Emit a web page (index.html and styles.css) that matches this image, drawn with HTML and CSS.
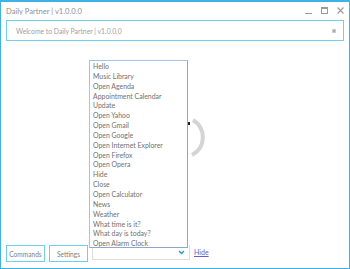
FILE: index.html
```html
<!DOCTYPE html>
<html>
<head>
<meta charset="utf-8">
<link rel="stylesheet" href="styles.css">
</head>
<body>
<div class="window">
  <div class="titlebar">
    <span class="title">Daily Partner | v1.0.0.0</span>
    <div class="controls">
      <span class="ctl min"></span>
      <span class="ctl max"></span>
      <span class="ctl close">
        <svg width="7" height="7" viewBox="0 0 7 7"><path d="M0.5 0.5L6.5 6.5M6.5 0.5L0.5 6.5" stroke="#999" stroke-width="1.1"/></svg>
      </span>
    </div>
  </div>
  <div class="welcome">
    <span class="welcome-text">Welcome to Daily Partner | v1.0.0.0</span>
    <span class="welcome-icon"></span>
  </div>
  <div class="content">
    <svg class="spinner" width="16" height="40" viewBox="0 0 16 40"><path d="M3 2 A20 20 0 0 1 2 37" fill="none" stroke="#d4d4d4" stroke-width="4"/></svg>
    <span class="blackmark"></span>
  </div>
  <div class="bottombar">
    <button class="btn">Commands</button>
    <button class="btn">Settings</button>
    <div class="combo"><span class="arrow"><svg width="7" height="5" viewBox="0 0 7 5"><path d="M1 1L3.5 3.5L6 1" fill="none" stroke="#1e9be0" stroke-width="1.4"/></svg></span></div>
    <a class="hide" href="#">Hide</a>
  </div>
  <ul class="list">
    <li>Hello</li>
    <li>Music Library</li>
    <li>Open Agenda</li>
    <li>Appointment Calendar</li>
    <li>Update</li>
    <li>Open Yahoo</li>
    <li>Open Gmail</li>
    <li>Open Google</li>
    <li>Open Internet Explorer</li>
    <li>Open Firefox</li>
    <li>Open Opera</li>
    <li>Hide</li>
    <li>Close</li>
    <li>Open Calculator</li>
    <li>News</li>
    <li>Weather</li>
    <li>What time is it?</li>
    <li>What day is today?</li>
    <li>Open Alarm Clock</li>
  </ul>
</div>
</body>
</html>
```
FILE: styles.css
```css
* { box-sizing: border-box; }
html, body { margin: 0; padding: 0; background: #fff; }
body { font-family: "Lato", "Open Sans", sans-serif; }
.window {
  position: relative;
  width: 350px;
  height: 269px;
  border: 1px solid #3bb3e4;
  border-top-width: 2px;
  display: flex;
  flex-direction: column;
  background: #fff;
}
.titlebar {
  height: 17px;
  display: flex;
  align-items: center;
  justify-content: space-between;
  padding-left: 5px;
  padding-right: 5px;
}
.title { font-size: 7.6px; color: #8f8f8f; }
.controls { display: flex; align-items: center; gap: 9px; }
.ctl { display: block; width: 7px; height: 7px; position: relative; }
.min::after { content: ""; position: absolute; left: 0; right: 0; bottom: 0; height: 1px; background: #999; }
.max { border: 1px solid #999; border-top-width: 2px; }
.close svg { display: block; }
.welcome {
  margin: 1px 5px 0 5px;
  height: 21px;
  border: 1px solid #6fd0ee;
  display: flex;
  align-items: center;
  justify-content: space-between;
  padding: 0 7px 0 9px;
}
.welcome-text { font-size: 6.8px; color: #a0a0a0; }
.welcome-icon { width: 4px; height: 4px; background: #aaa; border: 1px solid #ccc; }
.content { flex: 1; position: relative; }
.spinner { position: absolute; left: 189px; top: 77px; }
.blackmark { position: absolute; left: 187px; top: 81px; width: 2px; height: 3px; background: #222; }
.bottombar {
  height: 23px;
  display: flex;
  align-items: flex-start;
  padding-left: 5px;
  gap: 4px;
}
.btn {
  font-family: "Lato", "Open Sans", sans-serif;
  font-size: 6.6px;
  color: #808080;
  background: #fff;
  border: 1px solid #6fd0ee;
  height: 17px;
  width: 39px;
  padding: 0;
}
.combo {
  width: 98px;
  height: 15px;
  border: 1px solid #ddd;
  border-top: none;
  display: flex;
  justify-content: flex-end;
  align-items: center;
  padding-right: 4px;
}
.arrow svg { display: block; }
.hide {
  font-size: 7px;
  color: #6a5acd;
  text-decoration: underline;
  margin-left: 0;
  line-height: 15px;
}
.list {
  position: absolute;
  left: 88px;
  top: 58px;
  width: 99px;
  height: 188px;
  margin: 0;
  padding: 1px 0 0 3px;
  list-style: none;
  border: 1px solid #a7c4e4;
  border-right-color: #8ea9c8;
  border-bottom-color: #8ea9c8;
  background: #fff;
  overflow: hidden;
}
.list li {
  font-size: 6.9px;
  line-height: 9.85px;
  height: 9.85px;
  color: #707070;
  white-space: nowrap;
}
```
